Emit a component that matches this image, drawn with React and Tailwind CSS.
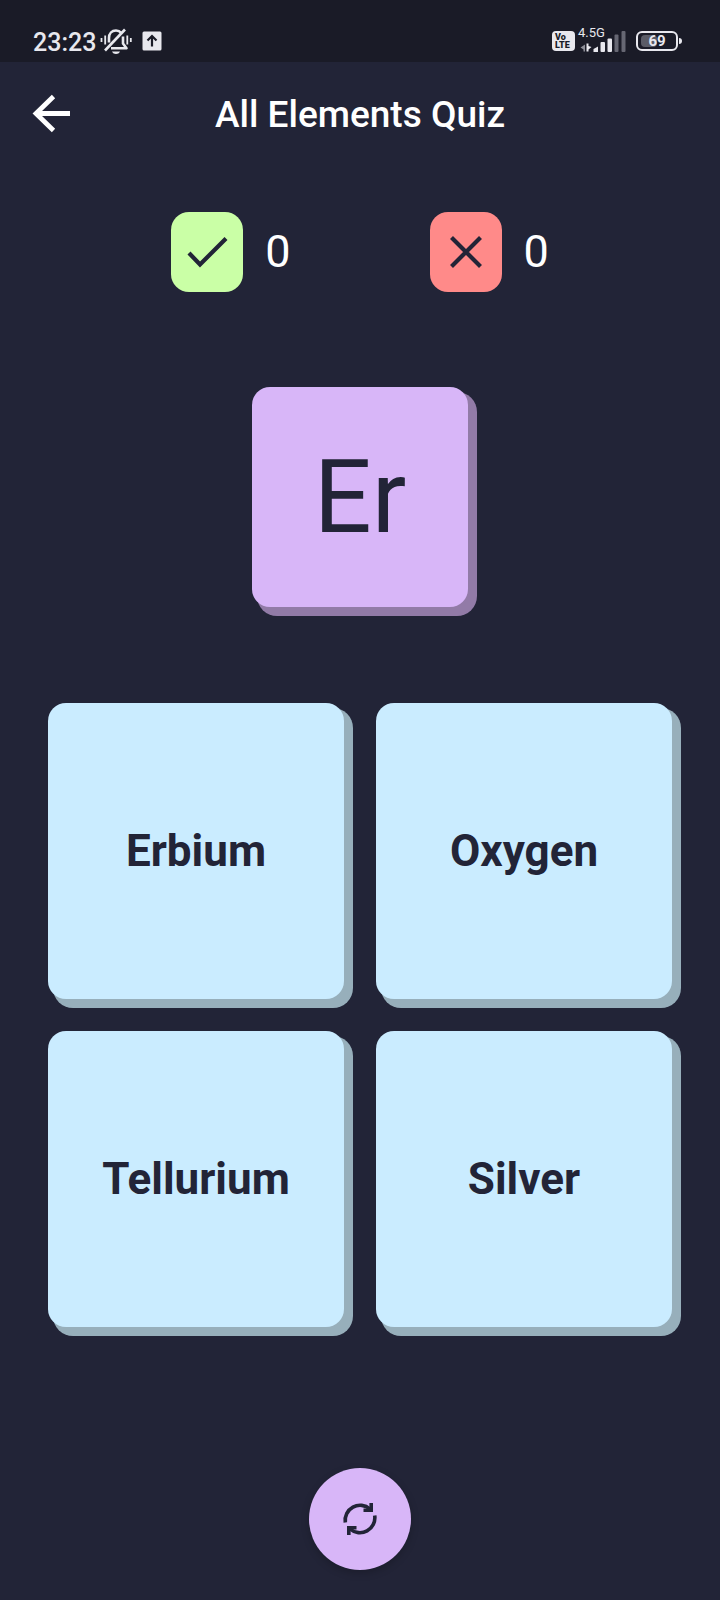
import { useState } from "react";

const OPTIONS = ["Erbium", "Oxygen", "Tellurium", "Silver"];

function MutedBellIcon() {
  return (
    <svg className="h-7 w-8" viewBox="0 0 32 28" fill="none" stroke="currentColor" strokeWidth="2.6" aria-hidden="true">
      <path d="M9 15.500V11c0-4.500 2.800-7.500 7-7.500 2.300 0 4 .9 5.200 2.300" />
      <path d="M23 9.500v7l3.500 4.700H11" strokeLinejoin="round" />
      <path d="M5 23.500 25 2.500" />
      <path d="M12 24.500h8c-1 1.800-2.200 2.500-4 2.500s-3-.7-4-2.500z" fill="currentColor" stroke="none" />
      <path d="M5.200 8.500v9M1.500 11v4M27.300 8.500v9M30.800 11v4" strokeWidth="1.800" />
    </svg>
  );
}

function UploadIcon() {
  return (
    <svg className="h-5 w-5" viewBox="0 0 20 20" aria-hidden="true">
      <rect x="0.500" y="0.500" width="19" height="19" rx="1.500" fill="#e8e8ee" />
      <path d="M10 15.500V5M5.500 9.500 10 5l4.500 4.500" fill="none" stroke="#1a1b27" strokeWidth="2.200" />
    </svg>
  );
}

function SignalIcon() {
  return (
    <svg className="h-6 w-12" viewBox="0 0 48 24" aria-hidden="true">
      <path d="M5 15.500v7h-1.500v-2L0.500 18.500z" fill="#8d8e98" />
      <path d="M6.500 14.500h2v2.500l3 1-3 2.500v2h-2z" fill="#e8e8ee" />
      <path d="M13.500 20 18 17.500V23h-4.500z" fill="#e8e8ee" />
      <rect x="20.500" y="13" width="4.500" height="10" rx="1" fill="#e8e8ee" />
      <rect x="27.500" y="9.500" width="4.500" height="13.500" rx="1" fill="#e8e8ee" />
      <rect x="34.500" y="5.500" width="4" height="17.500" rx="1" fill="#666773" />
      <rect x="41.500" y="2" width="4" height="21" rx="1" fill="#666773" />
    </svg>
  );
}

function StatusBar() {
  return (
    <div className="flex h-[62px] items-end justify-between bg-[#1a1b27] pr-[42px] pb-[7px] pl-[33px] text-[#e8e8ee]">
      <div className="flex h-7 items-center">
        <span className="pt-1 text-[25px] leading-6 font-medium">23:23</span>
        <span className="ml-1">
          <MutedBellIcon />
        </span>
        <span className="ml-2.5">
          <UploadIcon />
        </span>
      </div>
      <div className="flex h-7 items-center">
        <div className="flex h-5 w-[23px] flex-col items-start justify-center rounded bg-[#e8e8ee] pl-[3px] text-[9px] leading-2 font-black text-[#1a1b27]">
          <span>Vo</span>
          <span>LTE</span>
        </div>
        <div className="relative ml-[5px] flex w-12 items-end">
          <SignalIcon />
          <span className="absolute -top-1 -left-0.5 text-[13px] leading-4">4.5G</span>
        </div>
        <div className="relative ml-2 flex h-5 w-[42px] items-center justify-center rounded-md border-2 border-[#e8e8ee] text-[15px] leading-4 font-bold">
          <span className="absolute top-0.5 bottom-0.5 left-[3px] w-4 rounded-sm bg-[#5a5b66]" />
          <span className="relative">69</span>
          <span className="absolute top-[5px] -right-[6px] h-1.5 w-[3px] rounded-r-sm bg-[#e8e8ee]" />
        </div>
      </div>
    </div>
  );
}

function Header() {
  return (
    <header className="grid h-[104px] grid-cols-[48px_1fr_48px] items-center px-7 text-white">
      <button type="button" aria-label="Back" className="flex h-12 w-12 items-center justify-center">
        <svg className="h-12 w-12" viewBox="0 0 48 48" fill="none" stroke="currentColor" strokeWidth="4.800" aria-hidden="true">
          <path d="M42 23.500H8M25.500 6.500 8 23.500l17.500 17" />
        </svg>
      </button>
      <h1 className="pt-0.5 text-center text-[37px] leading-10 font-medium">All Elements Quiz</h1>
    </header>
  );
}

function Score({ label, value, tone, children }) {
  return (
    <div className="flex items-center gap-[22px]" aria-label={label}>
      <div className={`flex h-20 w-[72px] items-center justify-center rounded-[18px] ${tone}`}>
        <svg className="h-12 w-12" viewBox="0 0 48 48" fill="none" stroke="#222437" strokeWidth="4.200" aria-hidden="true">
          {children}
        </svg>
      </div>
      <span className="pb-0.5 text-[45px] leading-none text-white">{value}</span>
    </div>
  );
}

function OptionCard({ name, onSelect }) {
  return (
    <button
      type="button"
      onClick={onSelect}
      className="flex aspect-square items-center justify-center rounded-[18px] bg-[#caecff] text-[44px] leading-none font-bold text-[#222437] shadow-[7px_7px_0_2px_#97afbb]"
    >
      {name}
    </button>
  );
}

export default function App() {
  const [score, setScore] = useState({ right: 0, wrong: 0 });

  const answer = (name) =>
    setScore((s) => (name === "Erbium" ? { ...s, right: s.right + 1 } : { ...s, wrong: s.wrong + 1 }));

  return (
    <div className="flex min-h-screen flex-col bg-[#222437] font-[Roboto,sans-serif]">
      <StatusBar />
      <Header />
      <main className="flex flex-1 flex-col">
        <section className="flex justify-center gap-[139px] pt-[46px]">
          <Score label="Correct answers" value={score.right} tone="bg-[#caffa6]">
            <path d="M6 25 17 36.500 43 10.500" />
          </Score>
          <Score label="Wrong answers" value={score.wrong} tone="bg-[#ff8a89]">
            <path d="M9.500 9.500 38.500 38.500M38.500 9.500 9.500 38.500" />
          </Score>
        </section>
        <div className="mt-[95px] flex h-[220px] w-[216px] items-center justify-center self-center rounded-[18px] bg-[#d8b6f8] text-[102px] leading-none text-[#222437] shadow-[7px_7px_0_2px_#927ba7]">
          Er
        </div>
        <section className="mt-24 grid grid-cols-2 gap-8 px-12">
          {OPTIONS.map((name) => (
            <OptionCard key={name} name={name} onSelect={() => answer(name)} />
          ))}
        </section>
      </main>
      <footer className="flex justify-center pt-8 pb-[30px]">
        <button
          type="button"
          aria-label="Restart quiz"
          onClick={() => setScore({ right: 0, wrong: 0 })}
          className="flex h-[102px] w-[102px] items-center justify-center rounded-full bg-[#d8b6f8] shadow-[0_3px_8px_rgba(0,0,0,0.2)]"
        >
          <svg className="h-9 w-9" viewBox="0 0 36 36" fill="none" stroke="#222437" strokeWidth="3.600" aria-hidden="true">
            <path d="M3.300 21.500A15 15 0 0 1 28 8" />
            <path d="M32.700 14.500A15 15 0 0 1 8 28" />
            <path d="M29.200 2v7.200h-7.700" />
            <path d="M6.800 34v-7.200h7.700" />
          </svg>
        </button>
      </footer>
    </div>
  );
}
